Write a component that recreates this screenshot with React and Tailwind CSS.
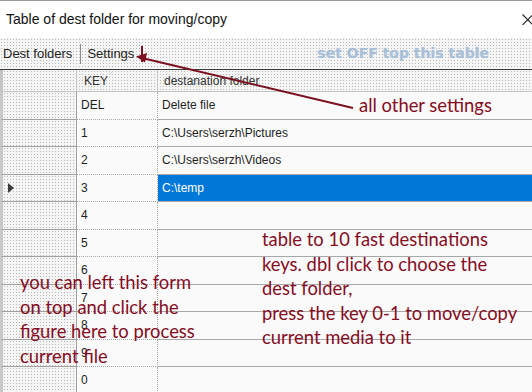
import React from "react";

const ROWS = [
  { key: "DEL", dest: "Delete file" },
  { key: "1", dest: "C:\\Users\\serzh\\Pictures" },
  { key: "2", dest: "C:\\Users\\serzh\\Videos" },
  { key: "3", dest: "C:\\temp", current: true },
  { key: "4", dest: "" },
  { key: "5", dest: "" },
  { key: "6", dest: "" },
  { key: "7", dest: "" },
  { key: "8", dest: "" },
  { key: "9", dest: "" },
  { key: "0", dest: "" },
];

const dotted =
  "bg-[#f5f5f5] bg-[radial-gradient(circle,#b9b9b9_0.7px,transparent_0.8px)] bg-[length:3px_3px]";

function GridRow({ row }) {
  return (
    <div className="flex h-[27.5px] shrink-0">
      <div className={`w-[77px] shrink-0 border-b border-r border-l-[3px] border-[#a0a0a0] border-l-[#c8c8c8] flex items-center pl-[5px] ${dotted}`}>
        {row.current && (
          <svg width="6" height="10" viewBox="0 0 6 10">
            <path d="M0 0 L6 5 L0 10 Z" fill="#3c3c3c" />
          </svg>
        )}
      </div>
      <div className="w-[81px] shrink-0 border-b border-r border-dotted border-[#a8a8a8] flex items-center pl-[4px] text-[#1e1e1e]">
        {row.key}
      </div>
      <div
        className={`flex-1 border-b border-[#a8a8a8] flex items-center pl-[4px] ${
          row.current ? "bg-[#0078d7] text-white" : "text-[#1e1e1e]"
        }`}
      >
        {row.dest}
      </div>
    </div>
  );
}

export default function App() {
  return (
    <div className="relative w-[532px] h-[392px] overflow-hidden bg-[#fafafa] flex flex-col border-t border-[#9a9a9a]">
      {/* Title bar */}
      <div className="h-[37px] shrink-0 bg-white flex items-center justify-between pl-[6px] font-['Liberation_Sans',sans-serif] text-[14px] text-[#111]">
        <span>Table of dest folder for moving/copy</span>
        <svg width="11" height="11" viewBox="0 0 11 11" className="mr-[-1px]">
          <path d="M0.5 0.5 L11 11 M11 0.5 L0.5 11" stroke="#222" strokeWidth="1.1" />
        </svg>
      </div>

      {/* Toolbar */}
      <div className={`h-[31px] shrink-0 flex items-center font-['Liberation_Sans',sans-serif] text-[13px] text-[#1e1e1e] ${dotted}`}>
        <span className="pl-[3px] pr-[8px]">Dest folders</span>
        <span className="w-[2px] h-[20px] border-l border-[#8a8a8a] border-r-white" />
        <span className="pl-[5px] pr-[7px]">Settings</span>
        <span className="w-[2px] h-[16px] border-l-2 border-[#7a1020]" />
        <span className="ml-[174px] font-['DejaVu_Sans',sans-serif] font-bold text-[14px] text-[#a9c0d8] [text-shadow:0_0_1px_#c8d6e4]">
          set OFF top this table
        </span>
      </div>

      {/* Grid */}
      <div className="flex-1 flex flex-col border-t border-[#3a3a3a] font-['Liberation_Sans',sans-serif] text-[12px]">
        <div className={`flex h-[22px] shrink-0 ${dotted}`}>
          <div className="w-[77px] shrink-0 border-r border-b border-l-[3px] border-[#c4c4c4]" />
          <div className="w-[81px] shrink-0 border-r border-b border-[#c4c4c4] flex items-center pl-[7px] text-[#333]">
            KEY
          </div>
          <div className="flex-1 border-b border-[#c4c4c4] flex items-center pl-[6px] text-[#333]">
            destanation folder
          </div>
        </div>
        {ROWS.map((row) => (
          <GridRow key={row.key} row={row} />
        ))}
      </div>

      {/* Annotations */}
      <svg className="absolute left-0 top-0 pointer-events-none" width="532" height="392">
        <line x1="353" y1="107" x2="142" y2="57" stroke="#7a1020" strokeWidth="2" />
        <path d="M136 55.5 L147 52 L145 61.5 Z" fill="#7a1020" />
      </svg>
      <div className="absolute left-[359px] top-[92px] font-['Lato',sans-serif] text-[18.4px] leading-[24px] text-[#850c1e]">
        all other settings
      </div>
      <div className="absolute left-[262px] top-[226px] font-['Lato',sans-serif] text-[18.4px] leading-[24.5px] text-[#850c1e]">
        table to 10 fast destinations
        <br />
        keys. dbl click to choose the
        <br />
        dest folder,
        <br />
        press the key 0-1 to move/copy
        <br />
        current media to it
      </div>
      <div className="absolute left-[20px] top-[269px] font-['Lato',sans-serif] text-[18.4px] leading-[24.7px] text-[#850c1e]">
        you can left this form
        <br />
        on top and click the
        <br />
        figure here to process
        <br />
        current file
      </div>
    </div>
  );
}
